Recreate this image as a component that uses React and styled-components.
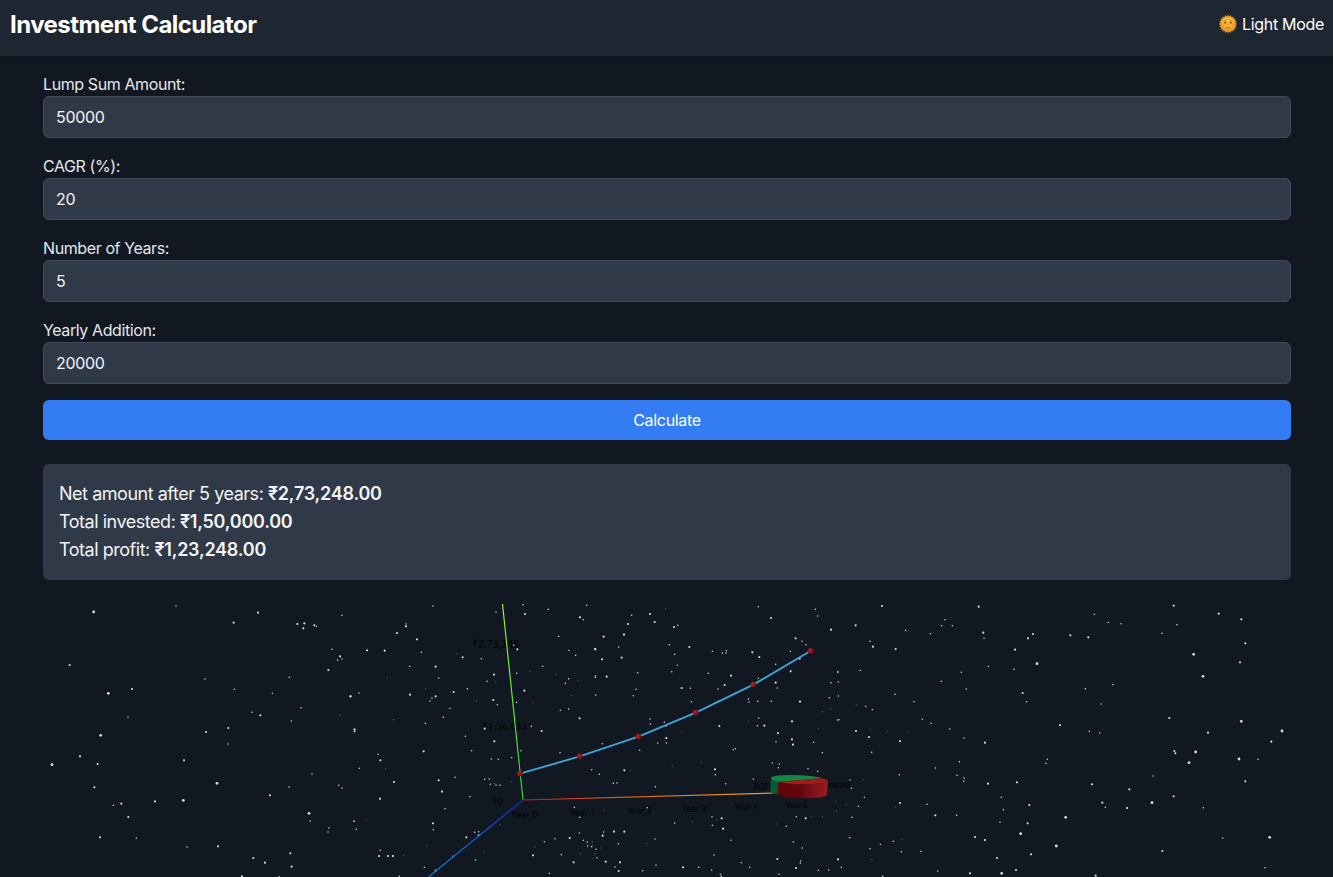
import React, { useState } from "react";
import styled, { createGlobalStyle } from "styled-components";

const GlobalStyle = createGlobalStyle`
  *, *::before, *::after { box-sizing: border-box; }
  html, body { margin: 0; padding: 0; height: 100%; overflow: hidden; }
  body {
    background: #111821;
    color: #e5e7eb;
    font-family: Inter, "Liberation Sans", sans-serif;
    font-size: 16px;
    line-height: 24px;
    -webkit-font-smoothing: antialiased;
  }
`;

const Page = styled.div`
  height: 100vh;
  display: flex;
  flex-direction: column;
  overflow: hidden;
`;

const Header = styled.header`
  flex: none;
  height: 56px;
  padding: 8px 9px 0 10px;
  display: flex;
  justify-content: space-between;
  align-items: flex-start;
  background: #1e2631;
  box-shadow: 0 1px 3px rgba(0, 0, 0, 0.14);
`;

const Title = styled.h1`
  margin: 1px 0 0;
  color: #fff;
  font-size: 24px;
  line-height: 32px;
  font-weight: 700;
  letter-spacing: -0.56px;
`;

const ModeButton = styled.button`
  display: flex;
  align-items: center;
  gap: 4px;
  height: 32px;
  padding: 0;
  border: 0;
  background: none;
  color: #fff;
  font: inherit;
  letter-spacing: -0.3px;
  white-space: nowrap;
`;

const SunSvg = styled.svg`
  width: 20px;
  height: 20px;
`;

const Main = styled.main`
  flex: 1;
  min-height: 0;
  display: flex;
  flex-direction: column;
  padding: 16px 42px 0 43px;
`;

const Form = styled.div`
  display: flex;
  flex-direction: column;
  gap: 16px;
`;

const Field = styled.label`
  display: flex;
  flex-direction: column;
  letter-spacing: -0.4px;
`;

const Input = styled.input`
  height: 42px;
  padding: 8px 12px;
  border: 1px solid #434c5a;
  border-radius: 6px;
  background: #303947;
  color: #f3f4f6;
  font: inherit;
  letter-spacing: -0.3px;
  outline: none;
`;

const CalculateButton = styled.button`
  height: 40px;
  border: 0;
  border-radius: 6px;
  background: #347cf2;
  color: #fff;
  font: inherit;
  letter-spacing: -0.3px;
`;

const Results = styled.section`
  flex: none;
  height: 116px;
  margin-top: 24px;
  padding: 16px;
  border-radius: 6px;
  background: #303947;
  color: #f3f4f6;
  font-size: 18px;
  line-height: 28px;
`;

const ResultLine = styled.p`
  margin: 0;
  letter-spacing: -0.47px;
  strong {
    font-weight: 600;
    letter-spacing: -0.24px;
  }
`;

const Scene = styled.svg`
  flex: none;
  display: block;
  width: 1248px;
  height: 273px;
  margin-top: 24px;
`;

const AxisText = styled.text`
  font-family: "Noto Sans", "Open Sans", sans-serif;
  fill: #020304;
`;

// Star triplets: x, y, magnitude (0 = faint, 3 = brightest), in thirds of a pixel.
const starTiles = [
  {
    x: 40,
    stars: [
      161,48,3, 408,30,1, 654,50,2, 581,80,2, 772,84,2, 793,82,2, 790,97,2, 823,88,2, 829,91,1, 906,58,1,
      876,160,1, 900,181,2, 906,189,1, 893,192,1, 865,222,2, 89,207,2, 495,249,1, 748,244,1, 276,279,2,
      205,292,3, 583,280,1, 697,292,1, 931,301,2, 783,335,1, 636,349,1, 661,358,2, 900,357,0, 264,363,1,
      754,375,1, 565,396,2, 498,408,2, 182,418,3, 943,400,1, 943,407,1, 564,444,1, 120,481,2, 432,493,2,
      173,504,2, 36,506,3, 816,534,1, 531,562,3, 896,568,1, 906,576,1, 747,573,1, 163,574,2, 690,598,2,
      430,613,3, 345,616,2, 244,623,2, 220,628,1, 265,663,2, 807,652,3, 811,675,1, 867,696,1, 864,708,1,
      942,676,1, 949,700,1, 180,724,2, 289,726,1, 441,753,1, 534,751,2, 751,772,2, 640,786,2, 675,800,2,
      755,812,2, 606,841,2, 718,842,1,
    ],
  },
  {
    x: 350,
    stars: [
      249,30,1, 438,49,1, 519,26,1, 525,54,2, 595,40,1, 710,28,1, 690,64,2, 700,71,1, 168,84,1, 168,91,2,
      141,111,2, 201,130,2, 51,163,2, 104,164,2, 214,169,1, 321,173,0, 338,184,2, 394,188,1, 179,211,1,
      257,212,2, 112,244,0, 266,246,1, 432,236,2, 411,256,1, 437,258,0, 500,232,1, 578,211,1, 626,121,1,
      736,160,2, 657,163,1, 677,178,1, 491,148,1, 502,160,2, 539,226,0, 618,235,0, 656,248,1, 646,262,1,
      685,253,0, 736,244,1, 27,291,1, 2,301,2, 180,296,2, 227,278,0, 246,306,1, 257,301,2, 240,315,1,
      311,288,2, 352,278,1, 430,312,2, 442,326,1, 379,315,0, 300,337,1, 280,364,1, 523,284,2, 500,319,1,
      548,319,0, 664,299,0, 631,343,1, 656,339,1, 689,367,2, 737,297,1, 130,371,0, 226,382,1, 14,401,2,
      14,406,1, 346,421,1, 433,436,2, 404,398,2, 575,405,2, 544,391,1, 221,466,2, 84,475,1, 91,493,2,
      107,518,0, 28,517,1, 132,558,2, 266,553,2, 315,544,1, 365,464,1, 424,489,1, 445,490,1, 485,485,1,
      630,470,1, 616,507,0, 513,464,1, 404,550,1, 418,549,1, 421,565,1, 434,562,0, 438,567,1, 450,568,1,
      483,557,0, 276,587,2, 360,602,1, 90,608,2, 285,638,1, 12,676,1, 48,672,0, 249,682,2, 250,701,1,
      450,687,0, 374,709,1, 386,707,1, 386,718,2, 349,724,2, 230,750,0, 91,763,1, 87,780,2, 114,780,2,
      129,780,2, 160,778,0, 309,781,1, 402,768,0, 376,792,1, 223,814,1, 257,824,2, 148,841,1, 673,634,1,
      689,664,1, 688,711,1, 659,726,2, 615,728,1, 583,737,1, 700,733,1, 712,738,1, 727,738,0, 713,750,1,
      725,752,1, 738,760,1, 549,778,2, 554,753,0, 634,776,1, 691,774,0, 671,799,2, 598,832,1, 741,785,1,
    ],
  },
  {
    x: 590,
    stars: [
      227,38,0, 125,58,1, 180,54,2, 194,78,2, 114,84,2, 252,93,2, 263,88,1, 41,122,2, 102,116,2, 15,159,2,
      95,185,2, 36,190,2, 86,153,1, 238,146,1, 298,153,2, 254,175,1, 262,208,1, 245,227,1, 367,166,1,
      397,171,1, 409,164,1, 408,171,1, 487,169,2, 508,183,2, 505,32,1, 543,66,2, 676,40,1, 683,60,1,
      723,101,2, 617,127,2, 636,136,1, 648,146,1, 601,166,1, 629,188,2, 16,240,1, 50,242,2, 143,230,1,
      138,280,1, 130,299,1, 275,276,2, 301,277,1, 355,232,1, 384,279,1, 404,267,2, 423,239,2, 385,316,1,
      376,320,1, 180,369,1, 181,384,1, 223,379,1, 228,390,1, 304,317,1, 388,390,2, 557,205,1, 602,226,2,
      557,260,2, 562,276,1, 505,247,1, 475,309,1, 477,318,1, 503,316,1, 544,316,1, 630,317,2, 718,305,1,
      698,347,0, 606,376,2, 743,228,1, 745,258,1, 743,372,1, 475,376,0, 502,389,1, 523,389,2, 506,366,1,
      37,443,1, 203,441,1, 229,441,1, 229,426,2, 149,463,1, 276,408,0, 333,500,0, 247,510,0, 436,458,1,
      430,461,1, 564,411,2, 558,437,1, 606,430,2, 609,446,2, 671,439,1, 686,397,0, 697,470,1, 547,501,1,
      565,515,1, 568,504,1, 654,518,1, 683,526,1, 5,521,1, 28,535,1, 103,523,2, 122,522,0, 70,562,1,
      81,561,1, 196,572,1, 375,520,2, 376,536,1, 407,563,1, 490,549,1, 42,642,0, 172,635,1, 254,681,1,
      307,677,0, 381,672,0, 366,662,1, 395,667,2, 367,688,1, 399,698,2, 423,733,1, 38,719,2, 41,708,1,
      72,707,2, 103,707,2, 170,743,0, 195,729,1, 85,743,1, 8,747,0, 14,774,0, 32,756,0, 9,787,0, 47,797,2,
      90,799,2, 75,813,1, 86,825,2, 158,824,1, 198,808,1, 279,814,2, 326,814,1, 372,777,1, 454,800,1,
      365,822,1, 391,835,1, 394,841,1, 562,789,2, 479,814,1, 560,684,0, 589,691,1, 619,662,1, 647,667,2,
      663,661,0, 697,662,0, 610,738,1, 637,756,1, 632,795,1, 631,802,1, 618,816,2, 685,823,1, 716,822,1,
      745,790,1, 567,835,1,
    ],
  },
  {
    x: 830,
    stars: [
      156,30,2, 446,32,2, 345,71,1, 335,89,1, 367,89,1, 77,88,2, 3,101,1, 227,103,1, 301,113,1, 460,110,2,
      462,127,1, 609,114,2, 594,127,2, 721,118,2, 120,136,1, 129,152,2, 197,159,2, 555,161,2, 621,203,3,
      475,211,1, 552,220,1, 91,223,1, 24,228,1, 394,229,1, 3,260,1, 334,256,1, 409,279,1, 578,291,2,
      195,295,1, 25,300,1, 252,317,1, 590,317,1, 79,325,0, 107,331,1, 127,341,1, 2,339,0, 277,370,1,
      27,371,1, 303,382,1, 690,387,2, 359,399,1, 78,405,2, 121,400,0, 172,406,0, 235,409,0, 117,423,2,
      402,426,1, 210,435,2, 465,440,2, 125,469,1, 388,497,1, 652,490,1, 648,502,1, 316,516,1, 208,536,1,
      381,538,1, 402,546,1, 401,556,1, 60,552,1, 100,551,0, 474,563,2, 561,559,2, 64,577,1, 103,604,1,
      514,604,1, 210,621,2, 291,625,1, 197,634,0, 85,631,1, 49,626,0, 16,616,0, 19,645,0, 598,627,2,
      520,641,1, 66,664,1, 316,658,2, 380,658,1, 707,664,3, 510,679,1, 593,682,2, 572,713,3, 59,725,1,
      435,723,2, 465,732,2, 217,730,0, 190,736,1, 151,745,1, 679,750,3, 120,758,1, 214,767,1, 273,766,1,
      603,775,2, 24,790,2, 125,791,0, 501,786,2, 34,814,1, 323,825,1, 558,822,2, 420,832,2, 515,832,3,
      158,841,1,
    ],
  },
  {
    x: 1070,
    stars: [
      311,29,2, 73,55,1, 446,53,2, 514,70,2, 115,79,1, 153,83,1, 321,86,1, 276,112,1, 55,124,2, 526,142,2,
      371,175,3, 510,199,2, 399,241,3, 46,278,1, 129,266,1, 93,324,1, 298,366,2, 514,376,3, 636,405,3,
      414,410,2, 58,406,1, 89,411,1, 604,437,2, 313,465,2, 316,472,2, 377,468,3, 357,500,3, 507,489,3,
      564,490,1, 249,540,1, 526,556,2, 66,565,2, 178,580,2, 311,601,2, 97,620,2, 246,620,3, 106,634,1,
      171,636,2, 400,635,1, 599,724,3, 458,726,1, 277,765,2, 585,815,1, 77,839,2,
    ],
  },
];

const starFill = ["#555c64", "#cfd3d8", "#d6dade", "#d8dbe0"];
const starRadius = [2, 2.3, 3.2, 4.2];

const growth = [
  [520, 773.7],
  [579.7, 756.4],
  [638.4, 736.6],
  [695.8, 712.7],
  [753.4, 684.6],
  [810.8, 650.8],
];

// text, x, baseline y, rendered width, font size, tilt
const labels = [
  ["₹2,73,248", 472, 647.3, 47, 10.8, 1],
  ["₹1,36,624", 482.5, 730, 44.5, 9.8, 0],
  ["₹0", 492.5, 804.7, 10, 9, 0],
  ["Year 0", 511.5, 817.8, 26, 9, -1],
  ["Year 1", 570.5, 815.7, 25, 9, -1],
  ["Year 2", 627.7, 814, 24, 9, -1.5],
  ["Year 3", 682.5, 812, 23.3, 8.8, -1.5],
  ["Year 4", 735, 810, 22.5, 8.6, -1],
  ["Year 5", 785.8, 808, 21.7, 8.4, 0],
  ["ROI", 753.5, 790.2, 14, 8.6, 0],
  ["Invested", 822, 788, 28, 8.4, 0],
];

function Sun() {
  const rays = Array.from({ length: 20 }, (_, i) => i * 18);
  return (
    <SunSvg viewBox="0 0 20 20" aria-hidden="true">
      {rays.map((a) => (
        <path key={a} d="M9.1 2.6 L10 .3 L10.9 2.6Z" fill="#c99a4a" transform={`rotate(${a} 10 10)`} />
      ))}
      <circle cx="10" cy="10" r="7.9" fill="#ee9a2b" />
      <ellipse cx="10" cy="8.3" rx="6.4" ry="5.6" fill="#f9b233" />
      <ellipse cx="7.3" cy="8.6" rx=".85" ry="1.05" fill="#684024" />
      <ellipse cx="12.9" cy="8.6" rx=".85" ry="1.05" fill="#684024" />
      <path d="M5.8 6.8 Q7 5.9 8.2 6.7 M11.9 6.7 Q13.1 5.9 14.3 6.8" fill="none" stroke="#d98622" strokeWidth=".6" />
      <path d="M9.3 11 Q10 11.6 10.8 11" fill="none" stroke="#d77a1c" strokeWidth=".7" />
      <path d="M8 13.3 Q10 14.3 12.1 13.3" fill="none" stroke="#c5651f" strokeWidth=".7" />
    </SunSvg>
  );
}

function Stars() {
  return starTiles.map((tile) => {
    const dots = [];
    for (let i = 0; i < tile.stars.length; i += 3) {
      const [x, y, m] = tile.stars.slice(i, i + 3);
      dots.push(<circle key={i} cx={x} cy={y} r={starRadius[m]} fill={starFill[m]} />);
    }
    return (
      <g key={tile.x} transform={`translate(${tile.x} 596) scale(.33333)`}>
        {dots}
      </g>
    );
  });
}

function Pie() {
  return (
    <g transform="translate(590 596) scale(.33333)">
      <path d="M543 545 Q543 553 566 557 L563 597 Q541 592 541 586Z" fill="#0a5a2b" />
      <path d="M543 545 Q545 538 600 537 Q660 537 700 547 L566 558 Q543 553 543 545Z" fill="#148743" />
      <path d="M566 557 Q600 566 650 565 Q713 563 714 554 L711 598 Q700 607 660 607 Q590 606 563 597Z" fill="url(#pieSide)" />
      <path d="M566 557 L690 547 Q715 550 714 555 Q713 563 650 565 Q600 566 566 557Z" fill="#9d1c20" />
    </g>
  );
}

function GrowthScene() {
  return (
    <Scene viewBox="43 604 1248 273">
      <defs>
        <linearGradient id="xAxis" gradientUnits="userSpaceOnUse" x1="523" y1="800" x2="773" y2="793">
          <stop offset="0" stopColor="#c01c1a" />
          <stop offset=".3" stopColor="#e2521f" />
          <stop offset="1" stopColor="#eba52c" />
        </linearGradient>
        <linearGradient id="yAxis" gradientUnits="userSpaceOnUse" x1="523" y1="800" x2="502" y2="604">
          <stop offset="0" stopColor="#26d830" />
          <stop offset="1" stopColor="#93f53e" />
        </linearGradient>
        <linearGradient id="zAxis" gradientUnits="userSpaceOnUse" x1="523" y1="800" x2="428" y2="877">
          <stop offset="0" stopColor="#1122c4" />
          <stop offset=".35" stopColor="#1057dc" />
          <stop offset="1" stopColor="#0e80d4" />
        </linearGradient>
        <linearGradient id="pieSide">
          <stop offset="0" stopColor="#62040b" />
          <stop offset=".45" stopColor="#65060d" />
          <stop offset=".75" stopColor="#84131a" />
          <stop offset="1" stopColor="#9c1c1f" />
        </linearGradient>
        <radialGradient id="marker" cx=".35" cy=".35" r=".7">
          <stop offset="0" stopColor="#b3262a" />
          <stop offset="1" stopColor="#6d0b10" />
        </radialGradient>
      </defs>

      {labels.map(([text, x, y, width, size, tilt]) => (
        <AxisText key={text} x={x} y={y} textLength={width} lengthAdjust="spacingAndGlyphs" fontSize={size} transform={`rotate(${tilt} ${x} ${y})`}>
          {text}
        </AxisText>
      ))}
      <Stars />
      <path d="M523 800 L502.5 604" stroke="url(#yAxis)" strokeWidth="1.2" />
      <path d="M523 800 L428.5 877" stroke="url(#zAxis)" strokeWidth="1.2" />
      <path d="M523 800 L775 793" stroke="url(#xAxis)" strokeWidth="1.2" />
      <polyline points={growth.map((p) => p.join(",")).join(" ")} fill="none" stroke="#40a3d6" strokeWidth="1.9" />
      {growth.map(([x, y]) => (
        <circle key={x} cx={x} cy={y} r="2.9" fill="url(#marker)" />
      ))}
      <Pie />
    </Scene>
  );
}

const fields = [
  { key: "lump", label: "Lump Sum Amount:" },
  { key: "cagr", label: "CAGR (%):" },
  { key: "years", label: "Number of Years:" },
  { key: "addition", label: "Yearly Addition:" },
];

export default function App() {
  const [values, setValues] = useState({ lump: "50000", cagr: "20", years: "5", addition: "20000" });
  return (
    <Page>
      <GlobalStyle />
      <Header>
        <Title>Investment Calculator</Title>
        <ModeButton>
          <Sun />
          Light Mode
        </ModeButton>
      </Header>
      <Main>
        <Form>
          {fields.map((f) => (
            <Field key={f.key}>
              {f.label}
              <Input value={values[f.key]} onChange={(e) => setValues({ ...values, [f.key]: e.target.value })} />
            </Field>
          ))}
          <CalculateButton>Calculate</CalculateButton>
        </Form>
        <Results>
          <ResultLine>Net amount after 5 years: <strong>₹2,73,248.00</strong></ResultLine>
          <ResultLine>Total invested: <strong>₹1,50,000.00</strong></ResultLine>
          <ResultLine>Total profit: <strong>₹1,23,248.00</strong></ResultLine>
        </Results>
        <GrowthScene />
      </Main>
    </Page>
  );
}
